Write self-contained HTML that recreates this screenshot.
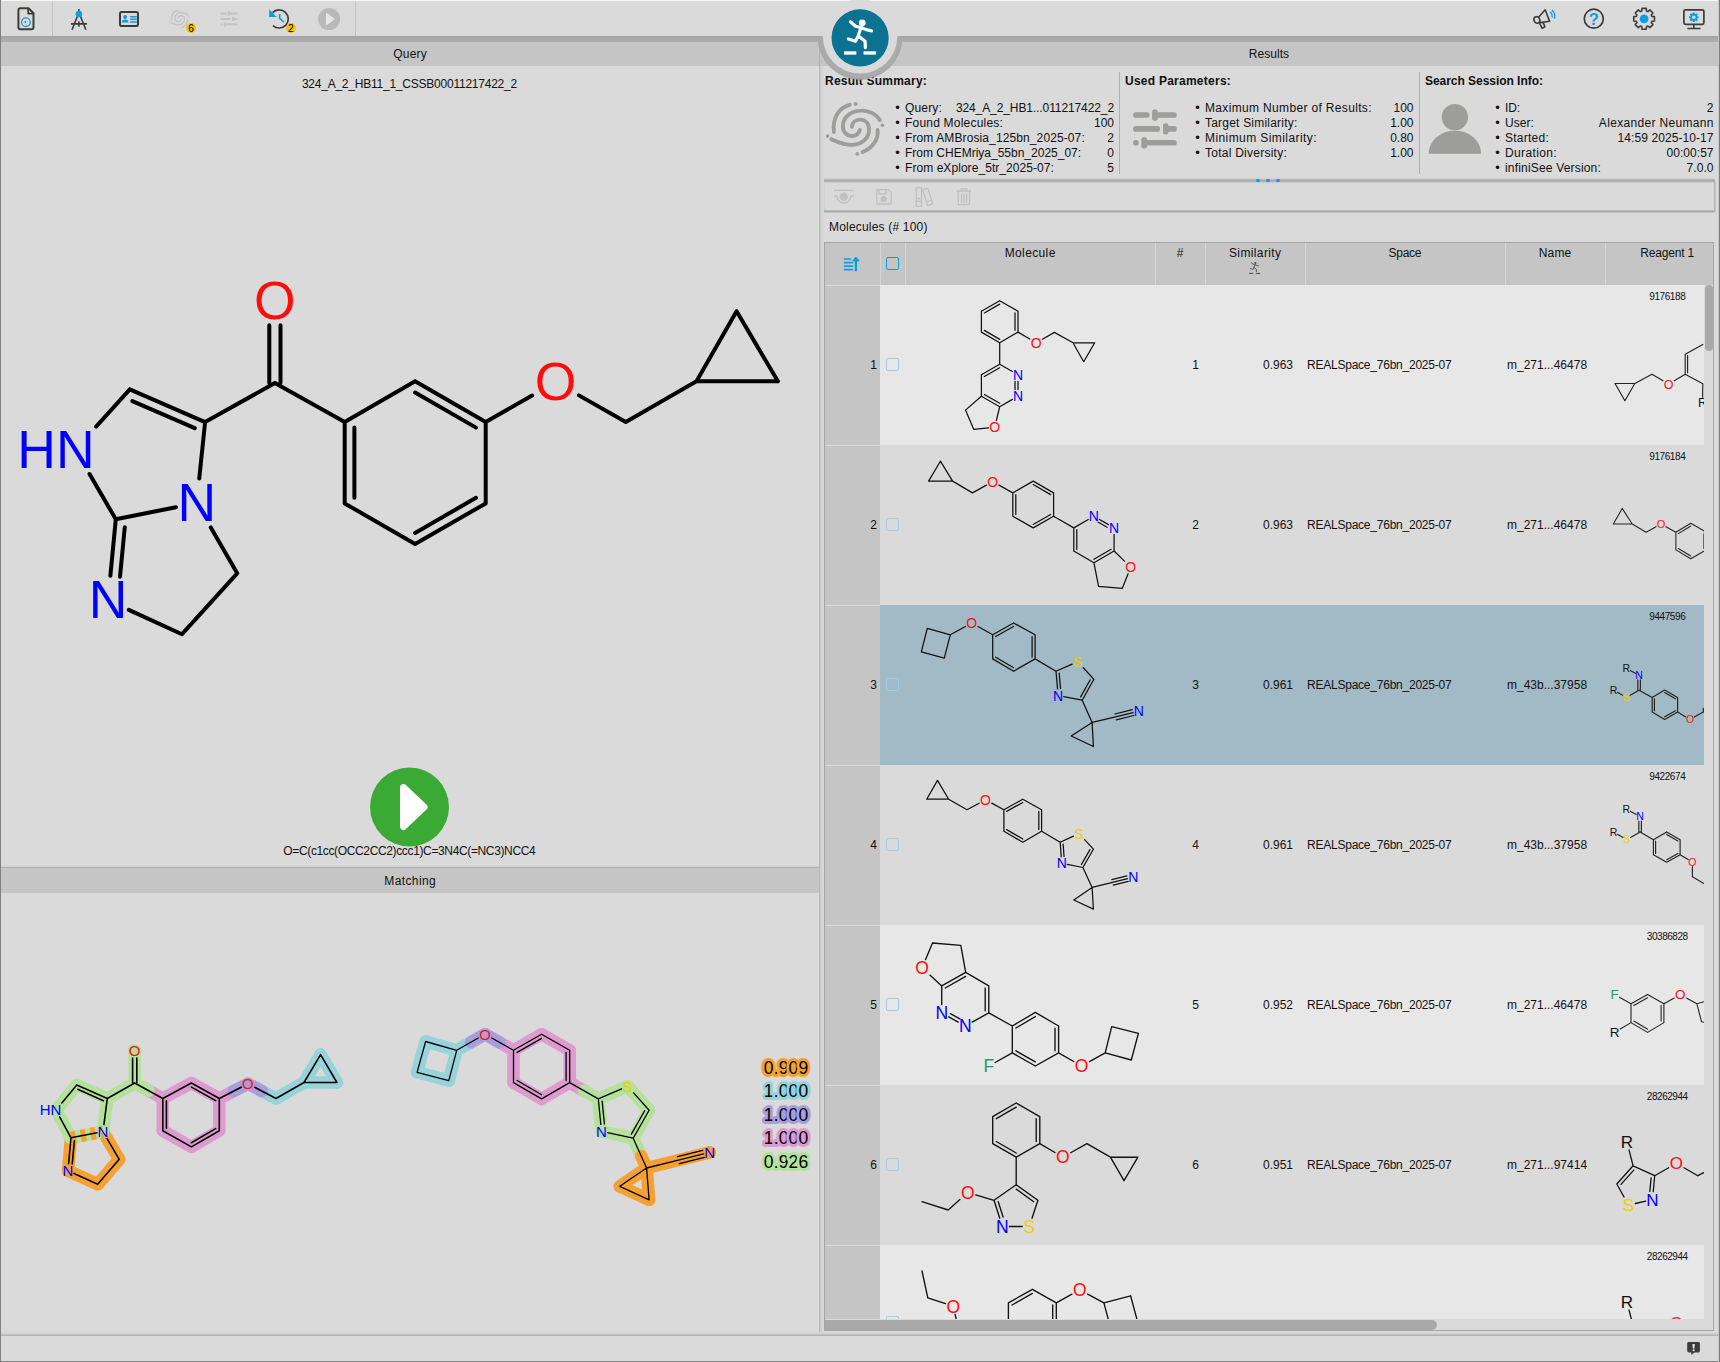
<!DOCTYPE html>
<html lang="en"><head><meta charset="utf-8"><title>infiniSee</title>
<style>
html,body{margin:0;padding:0;background:#dadada}
body{width:1720px;height:1362px;overflow:hidden;font-family:"Liberation Sans",sans-serif;color:#111}
#app{position:relative;width:1720px;height:1362px;overflow:hidden;background:#dadada}
.a{position:absolute}
.t{position:absolute;white-space:pre;color:#111}
svg{position:absolute;overflow:visible}

</style></head>
<body>
<div id="app">
<div class="a" style="left:0px;top:0px;width:1720px;height:1px;background:#f6f6f6;"></div>
<div class="a" style="left:52px;top:1px;width:1px;height:35px;background:#c4c4c4;"></div>
<div class="a" style="left:355px;top:1px;width:1px;height:35px;background:#c4c4c4;"></div>
<div class="a" style="left:0px;top:36px;width:1720px;height:6px;background:linear-gradient(#a4a4a4,#aeaeae);"></div>
<div class="a" style="left:0px;top:42px;width:1720px;height:24px;background:#c5c5c5;"></div>
<div class="a" style="left:819px;top:42px;width:1px;height:24px;background:#b0b0b0;"></div>
<div class="a" style="left:819px;top:66px;width:4px;height:1268px;background:linear-gradient(90deg,#b0b0b0,#cbcbcb 35%,#dadada);"></div>
<div class="a" style="left:1px;top:865px;width:818px;height:2px;background:linear-gradient(#dadada,#cfcfcf);"></div>
<div class="a" style="left:1px;top:867px;width:818px;height:1px;background:#b0b0b0;"></div>
<div class="a" style="left:1px;top:868px;width:818px;height:25px;background:#c5c5c5;"></div>
<div class="a" style="left:0px;top:1332px;width:1720px;height:4px;background:linear-gradient(#dadada,#d2d2d2 45%,#b2b2b2 80%,#b6b6b6);"></div>
<div class="a" style="left:0px;top:1361px;width:1720px;height:1px;background:#858585;"></div>
<div class="a" style="left:0px;top:0px;width:1px;height:1362px;background:#808080;"></div>
<div class="a" style="left:1719px;top:0px;width:1px;height:1362px;background:#7c7c7c;"></div>
<div class="a" style="left:1718px;top:0px;width:1px;height:1362px;background:#c8c8c8;"></div>
<div class="a" style="left:1119px;top:72px;width:1px;height:102px;background:#b0b0b0;"></div>
<div class="a" style="left:1419px;top:72px;width:1px;height:102px;background:#b0b0b0;"></div>
<div class="a" style="left:824px;top:177.5px;width:891px;height:5px;background:linear-gradient(#dadada,#b6b6b6 35%,#a7a7a7 55%,#bcbcbc 80%,#d8d8d8);"></div>
<div class="a" style="left:1256.4px;top:178.8px;width:3.2px;height:3.2px;background:#0b9de2;border-radius:50%"></div>
<div class="a" style="left:1266.4px;top:178.8px;width:3.2px;height:3.2px;background:#0b9de2;border-radius:50%"></div>
<div class="a" style="left:1276.4px;top:178.8px;width:3.2px;height:3.2px;background:#0b9de2;border-radius:50%"></div>
<div class="a" style="left:824px;top:209.8px;width:891px;height:3px;background:linear-gradient(#c6c6c6,#a8a8a8 50%,#cfcfcf);"></div>
<div class="a" style="left:1713.8px;top:181px;width:2px;height:31px;background:linear-gradient(90deg,#adadad,#cdcdcd);"></div>
<div class="a" style="left:824px;top:182px;width:1px;height:28px;background:#d0d0d0;"></div>
<div class="a" style="left:824px;top:242px;width:890px;height:1089px;background:#a6a6a6;"></div>
<div class="a" style="left:825px;top:243px;width:888px;height:42px;background:#c5c5c5;"></div>
<div class="a" style="left:880px;top:243px;width:1px;height:42px;background:#d6d6d6;"></div>
<div class="a" style="left:905px;top:243px;width:1px;height:42px;background:#d6d6d6;"></div>
<div class="a" style="left:1155px;top:243px;width:1px;height:42px;background:#d6d6d6;"></div>
<div class="a" style="left:1205px;top:243px;width:1px;height:42px;background:#d6d6d6;"></div>
<div class="a" style="left:1305px;top:243px;width:1px;height:42px;background:#d6d6d6;"></div>
<div class="a" style="left:1505px;top:243px;width:1px;height:42px;background:#d6d6d6;"></div>
<div class="a" style="left:1605px;top:243px;width:1px;height:42px;background:#d6d6d6;"></div>
<div class="a" style="left:825px;top:285px;width:55px;height:160px;background:#c5c5c5;"></div>
<div class="a" style="left:825px;top:285px;width:55px;height:1px;background:#dadada;"></div>
<div class="a" style="left:880px;top:285px;width:824px;height:160px;background:#e7e7e7;"></div>
<div class="a" style="left:886px;top:358px;width:11px;height:11px;border:1px solid #9fcbe4;border-radius:2px"></div>
<div class="a" style="left:825px;top:445px;width:55px;height:160px;background:#c5c5c5;"></div>
<div class="a" style="left:825px;top:445px;width:55px;height:1px;background:#dadada;"></div>
<div class="a" style="left:880px;top:445px;width:824px;height:160px;background:#dadada;"></div>
<div class="a" style="left:886px;top:518px;width:11px;height:11px;border:1px solid #9fcbe4;border-radius:2px"></div>
<div class="a" style="left:825px;top:605px;width:55px;height:160px;background:#c5c5c5;"></div>
<div class="a" style="left:825px;top:605px;width:55px;height:1px;background:#dadada;"></div>
<div class="a" style="left:880px;top:605px;width:824px;height:160px;background:#a2bac5;"></div>
<div class="a" style="left:886px;top:678px;width:11px;height:11px;border:1px solid #9fcbe4;border-radius:2px"></div>
<div class="a" style="left:825px;top:765px;width:55px;height:160px;background:#c5c5c5;"></div>
<div class="a" style="left:825px;top:765px;width:55px;height:1px;background:#dadada;"></div>
<div class="a" style="left:880px;top:765px;width:824px;height:160px;background:#dadada;"></div>
<div class="a" style="left:886px;top:838px;width:11px;height:11px;border:1px solid #9fcbe4;border-radius:2px"></div>
<div class="a" style="left:825px;top:925px;width:55px;height:160px;background:#c5c5c5;"></div>
<div class="a" style="left:825px;top:925px;width:55px;height:1px;background:#dadada;"></div>
<div class="a" style="left:880px;top:925px;width:824px;height:160px;background:#e7e7e7;"></div>
<div class="a" style="left:886px;top:998px;width:11px;height:11px;border:1px solid #9fcbe4;border-radius:2px"></div>
<div class="a" style="left:825px;top:1085px;width:55px;height:160px;background:#c5c5c5;"></div>
<div class="a" style="left:825px;top:1085px;width:55px;height:1px;background:#dadada;"></div>
<div class="a" style="left:880px;top:1085px;width:824px;height:160px;background:#dadada;"></div>
<div class="a" style="left:886px;top:1158px;width:11px;height:11px;border:1px solid #9fcbe4;border-radius:2px"></div>
<div class="a" style="left:825px;top:1245px;width:55px;height:74px;background:#c5c5c5;"></div>
<div class="a" style="left:825px;top:1245px;width:55px;height:1px;background:#dadada;"></div>
<div class="a" style="left:880px;top:1245px;width:824px;height:74px;background:#e7e7e7;"></div>
<div class="a" style="left:886px;top:1316px;width:11px;height:3px;border:1px solid #9fcbe4;border-bottom:0;border-radius:2px 2px 0 0"></div>
<div class="a" style="left:1704px;top:285px;width:9px;height:1034px;background:#dadada;"></div>
<div class="a" style="left:1704.5px;top:285px;width:8.5px;height:66px;background:#a9a9a9;border-radius:4px"></div>
<div class="a" style="left:825px;top:1319px;width:888px;height:11px;background:#dadada;"></div>
<div class="a" style="left:825px;top:1319.5px;width:612px;height:10.5px;background:#a9a9a9;border-radius:0 5px 5px 0"></div>
<div class="a" style="left:886px;top:257px;width:11px;height:11px;border:1px solid #0b9de2;border-radius:2px"></div>
<svg class="a" style="left:0;top:0" width="1720" height="1362" viewBox="0 0 1720 1362"><path d="M280.5 383L280.5 325.14M269.3 383L269.3 325.14M274.9 383L205.1 422.1M205.1 422.1L129.8 389.4M194.77 428.19L132.4 401.1M129.8 389.4L96.1 426.62M89.52 474.04L115.8 519.2M115.8 519.2L175.9 507.17M199.24 478.56L205.1 422.1M115.8 519.2L110.35 575.86M124.78 527.14L120.01 576.79M128.8 609.83L182 634.2M182 634.2L237.2 573.3M237.2 573.3L210.78 527.44M274.9 383L344.7 422M344.7 422L415.1 381.3M415.1 381.3L485.7 422M415.11 392.5L476 427.61M485.7 422L485.7 503.4M485.7 503.4L415.1 544.1M476 497.79L415.11 532.9M415.1 544.1L344.7 503.4M344.7 503.4L344.7 422M354.4 497.8L354.4 427.6M485.7 422L532.1 395.48M578.9 395.38L625.8 422M625.8 422L696.5 381.3M696.5 381.3L736.6 311.3M736.6 311.3L777.9 381.3M777.9 381.3L696.5 381.3" stroke="#000" stroke-width="4" stroke-linecap="round" fill="none"/>
<text x="274.9" y="318.65" font-family="Liberation Sans, sans-serif" font-size="53.5" fill="#ff0d0d" text-anchor="middle">O</text>
<text x="94.61" y="467.55" font-family="Liberation Sans, sans-serif" font-size="53.5" fill="#0000ff" text-anchor="end">HN</text>
<text x="196.7" y="520.95" font-family="Liberation Sans, sans-serif" font-size="53.5" fill="#0000ff" text-anchor="middle">N</text>
<text x="108" y="618.25" font-family="Liberation Sans, sans-serif" font-size="53.5" fill="#0000ff" text-anchor="middle">N</text>
<text x="555.5" y="400.05" font-family="Liberation Sans, sans-serif" font-size="53.5" fill="#ff0d0d" text-anchor="middle">O</text></svg>
<svg class="a" style="left:0;top:0" width="1720" height="1362" viewBox="0 0 1720 1362"><path d="M162.8 1098.5L191.4 1083" stroke="#dd9bd0" stroke-width="12.5" stroke-linecap="round" fill="none"/>
<path d="M191.4 1083L219.3 1098.5" stroke="#dd9bd0" stroke-width="12.5" stroke-linecap="round" fill="none"/>
<path d="M219.3 1098.5L219.3 1130.7" stroke="#dd9bd0" stroke-width="12.5" stroke-linecap="round" fill="none"/>
<path d="M219.3 1130.7L191.4 1146.9" stroke="#dd9bd0" stroke-width="12.5" stroke-linecap="round" fill="none"/>
<path d="M191.4 1146.9L162.8 1130.7" stroke="#dd9bd0" stroke-width="12.5" stroke-linecap="round" fill="none"/>
<path d="M162.8 1130.7L162.8 1098.5" stroke="#dd9bd0" stroke-width="12.5" stroke-linecap="round" fill="none"/>
<path d="M148.75 1090.75L162.8 1098.5" stroke="#dd9bd0" stroke-width="12.5" stroke-linecap="round" fill="none"/>
<path d="M219.3 1098.5L233.6 1091.1" stroke="#dd9bd0" stroke-width="12.5" stroke-linecap="round" fill="none"/>
<path d="M261.95 1091.1L276 1098.5" stroke="#96d4da" stroke-width="12.5" stroke-linecap="round" fill="none"/>
<path d="M276 1098.5L304 1082.5" stroke="#96d4da" stroke-width="12.5" stroke-linecap="round" fill="none"/>
<path d="M304 1082.5L320.6 1054.6" stroke="#96d4da" stroke-width="12.5" stroke-linecap="round" fill="none"/>
<path d="M320.6 1054.6L336.9 1082.5" stroke="#96d4da" stroke-width="12.5" stroke-linecap="round" fill="none"/>
<path d="M336.9 1082.5L304 1082.5" stroke="#96d4da" stroke-width="12.5" stroke-linecap="round" fill="none"/>
<path d="M71 1137.8L68 1170.7" stroke="#f5a033" stroke-width="12.5" stroke-linecap="round" fill="none"/>
<path d="M68 1170.7L97.7 1184.3" stroke="#f5a033" stroke-width="12.5" stroke-linecap="round" fill="none"/>
<path d="M97.7 1184.3L119.2 1159.3" stroke="#f5a033" stroke-width="12.5" stroke-linecap="round" fill="none"/>
<path d="M119.2 1159.3L103 1131.6" stroke="#f5a033" stroke-width="12.5" stroke-linecap="round" fill="none"/>
<circle cx="134.7" cy="1051" r="7" fill="#b4e19b"/>
<path d="M134.7 1051L134.7 1083" stroke="#b4e19b" stroke-width="12.5" stroke-linecap="round" fill="none"/>
<path d="M134.7 1083L148.75 1090.75" stroke="#b4e19b" stroke-width="12.5" stroke-linecap="round" fill="none"/>
<path d="M134.7 1083L107.3 1098.5" stroke="#b4e19b" stroke-width="12.5" stroke-linecap="round" fill="none"/>
<path d="M107.3 1098.5L76.8 1084.9" stroke="#b4e19b" stroke-width="12.5" stroke-linecap="round" fill="none"/>
<path d="M76.8 1084.9L56 1110" stroke="#b4e19b" stroke-width="12.5" stroke-linecap="round" fill="none"/>
<path d="M56 1110L71 1137.8" stroke="#b4e19b" stroke-width="12.5" stroke-linecap="round" fill="none"/>
<path d="M103 1131.6L107.3 1098.5" stroke="#b4e19b" stroke-width="12.5" stroke-linecap="round" fill="none"/>
<path d="M71 1137.8L103 1131.6" stroke="#b4e19b" stroke-width="12.5" stroke-linecap="round" fill="none"/>
<path d="M71 1137.8L103 1131.6" stroke="#f5a033" stroke-width="12.5" stroke-dasharray="5 5" fill="none"/>
<path d="M233.6 1091.1L247.9 1083.7" stroke="#a99ddc" stroke-width="12.5" stroke-linecap="round" fill="none"/>
<path d="M247.9 1083.7L261.95 1091.1" stroke="#a99ddc" stroke-width="12.5" stroke-linecap="round" fill="none"/>
<path d="M136.8 1083L136.8 1058.05M132.6 1083L132.6 1058.05M134.7 1083L107.3 1098.5M107.3 1098.5L76.8 1084.9M103.45 1100.72L77.72 1089.25M76.8 1084.9L61.84 1102.95M59.8 1117.05L71 1137.8M71 1137.8L97 1132.76M103.92 1124.55L107.3 1098.5M71 1137.8L68.64 1163.65M74.35 1140.73L72.23 1163.98M74 1173.45L97.7 1184.3M97.7 1184.3L119.2 1159.3M119.2 1159.3L107.12 1138.65M134.7 1083L162.8 1098.5M162.8 1098.5L191.4 1083M191.4 1083L219.3 1098.5M191.47 1087.16L215.73 1100.64M219.3 1098.5L219.3 1130.7M219.3 1130.7L191.4 1146.9M215.69 1128.63L191.39 1142.74M191.4 1146.9L162.8 1130.7M162.8 1130.7L162.8 1098.5M166.4 1128.62L166.4 1100.58M219.3 1098.5L241.15 1087.19M254.65 1087.26L276 1098.5M276 1098.5L304 1082.5M304 1082.5L320.6 1054.6M320.6 1054.6L336.9 1082.5M336.9 1082.5L304 1082.5" stroke="#000" stroke-width="1.6" stroke-linecap="round" fill="none"/>
<text x="134.7" y="1056.37" font-family="Liberation Sans, sans-serif" font-size="15" fill="#ff0d0d" text-anchor="middle">O</text>
<text x="61.41" y="1115.37" font-family="Liberation Sans, sans-serif" font-size="15" fill="#0000ff" text-anchor="end">HN</text>
<text x="103" y="1136.97" font-family="Liberation Sans, sans-serif" font-size="15" fill="#0000ff" text-anchor="middle">N</text>
<text x="68" y="1176.07" font-family="Liberation Sans, sans-serif" font-size="15" fill="#0000ff" text-anchor="middle">N</text>
<text x="247.9" y="1089.07" font-family="Liberation Sans, sans-serif" font-size="15" fill="#ff0d0d" text-anchor="middle">O</text><path d="M425.6 1041.5L456.7 1050.3" stroke="#96d4da" stroke-width="12.5" stroke-linecap="round" fill="none"/>
<path d="M456.7 1050.3L448.8 1080.6" stroke="#96d4da" stroke-width="12.5" stroke-linecap="round" fill="none"/>
<path d="M448.8 1080.6L417.1 1072.3" stroke="#96d4da" stroke-width="12.5" stroke-linecap="round" fill="none"/>
<path d="M417.1 1072.3L425.6 1041.5" stroke="#96d4da" stroke-width="12.5" stroke-linecap="round" fill="none"/>
<path d="M456.7 1050.3L470.85 1042.25" stroke="#96d4da" stroke-width="12.5" stroke-linecap="round" fill="none"/>
<path d="M513.5 1050.3L541.6 1034.2" stroke="#dd9bd0" stroke-width="12.5" stroke-linecap="round" fill="none"/>
<path d="M541.6 1034.2L569.7 1050.3" stroke="#dd9bd0" stroke-width="12.5" stroke-linecap="round" fill="none"/>
<path d="M569.7 1050.3L569.7 1082.6" stroke="#dd9bd0" stroke-width="12.5" stroke-linecap="round" fill="none"/>
<path d="M569.7 1082.6L541.6 1098.9" stroke="#dd9bd0" stroke-width="12.5" stroke-linecap="round" fill="none"/>
<path d="M541.6 1098.9L513.5 1082.6" stroke="#dd9bd0" stroke-width="12.5" stroke-linecap="round" fill="none"/>
<path d="M513.5 1082.6L513.5 1050.3" stroke="#dd9bd0" stroke-width="12.5" stroke-linecap="round" fill="none"/>
<path d="M499.25 1042.25L513.5 1050.3" stroke="#dd9bd0" stroke-width="12.5" stroke-linecap="round" fill="none"/>
<path d="M569.7 1082.6L584 1090.75" stroke="#dd9bd0" stroke-width="12.5" stroke-linecap="round" fill="none"/>
<path d="M584 1090.75L598.3 1098.9" stroke="#b4e19b" stroke-width="12.5" stroke-linecap="round" fill="none"/>
<path d="M598.3 1098.9L627.6 1086.2" stroke="#b4e19b" stroke-width="12.5" stroke-linecap="round" fill="none"/>
<path d="M627.6 1086.2L649.1 1110.2" stroke="#b4e19b" stroke-width="12.5" stroke-linecap="round" fill="none"/>
<path d="M649.1 1110.2L633.2 1138.2" stroke="#b4e19b" stroke-width="12.5" stroke-linecap="round" fill="none"/>
<path d="M633.2 1138.2L601.5 1131.4" stroke="#b4e19b" stroke-width="12.5" stroke-linecap="round" fill="none"/>
<path d="M601.5 1131.4L598.3 1098.9" stroke="#b4e19b" stroke-width="12.5" stroke-linecap="round" fill="none"/>
<path d="M633.2 1138.2L641.24 1156.08" stroke="#b4e19b" stroke-width="12.5" stroke-linecap="round" fill="none"/>
<path d="M641.24 1156.08L646.6 1168" stroke="#f5a033" stroke-width="12.5" stroke-linecap="round" fill="none"/>
<path d="M646.6 1168L678.4 1160.2" stroke="#f5a033" stroke-width="12.5" stroke-linecap="round" fill="none"/>
<path d="M678.4 1160.2L709.6 1152.4" stroke="#f5a033" stroke-width="12.5" stroke-linecap="round" fill="none"/>
<path d="M646.6 1168L619.8 1186.3" stroke="#f5a033" stroke-width="12.5" stroke-linecap="round" fill="none"/>
<path d="M619.8 1186.3L649.1 1199.8" stroke="#f5a033" stroke-width="12.5" stroke-linecap="round" fill="none"/>
<path d="M649.1 1199.8L646.6 1168" stroke="#f5a033" stroke-width="12.5" stroke-linecap="round" fill="none"/>
<circle cx="709.6" cy="1152.4" r="6.5" fill="#f5a033"/>
<path d="M470.85 1042.25L485 1034.2" stroke="#a99ddc" stroke-width="12.5" stroke-linecap="round" fill="none"/>
<path d="M485 1034.2L499.25 1042.25" stroke="#a99ddc" stroke-width="12.5" stroke-linecap="round" fill="none"/>
<path d="M425.6 1041.5L456.7 1050.3M456.7 1050.3L448.8 1080.6M448.8 1080.6L417.1 1072.3M417.1 1072.3L425.6 1041.5M456.7 1050.3L478.25 1038.04M491.75 1038.01L513.5 1050.3M513.5 1050.3L541.6 1034.2M517.09 1052.39L541.59 1038.36M541.6 1034.2L569.7 1050.3M569.7 1050.3L569.7 1082.6M566.1 1052.38L566.1 1080.52M569.7 1082.6L541.6 1098.9M541.6 1098.9L513.5 1082.6M541.61 1094.74L517.1 1080.53M513.5 1082.6L513.5 1050.3M569.7 1082.6L598.3 1098.9M598.3 1098.9L621.6 1088.8M633.6 1092.9L649.1 1110.2M649.1 1110.2L633.2 1138.2M644.68 1110.7L631.36 1134.15M633.2 1138.2L607.5 1132.69M600.81 1124.35L598.3 1098.9M604.39 1124L602.14 1101.15M633.2 1138.2L646.6 1168M646.6 1168L678.4 1160.2M678.4 1160.2L703.6 1153.9M679.27 1163.69L704.47 1157.39M677.53 1156.71L702.73 1150.41M646.6 1168L619.8 1186.3M619.8 1186.3L649.1 1199.8M649.1 1199.8L646.6 1168" stroke="#000" stroke-width="1.3" stroke-linecap="round" fill="none"/>
<text x="485" y="1039.57" font-family="Liberation Sans, sans-serif" font-size="15" fill="#ff0d0d" text-anchor="middle">O</text>
<text x="627.6" y="1091.57" font-family="Liberation Sans, sans-serif" font-size="15" fill="#f2cb05" text-anchor="middle">S</text>
<text x="601.5" y="1136.77" font-family="Liberation Sans, sans-serif" font-size="15" fill="#0000ff" text-anchor="middle">N</text>
<text x="709.6" y="1157.77" font-family="Liberation Sans, sans-serif" font-size="15" fill="#0000ff" text-anchor="middle">N</text></svg>
<svg class="a" style="left:0;top:0" width="1720" height="1362" viewBox="0 0 1720 1362"><defs><clipPath id="tc"><rect x="880" y="285" width="824" height="1034"/></clipPath></defs><g clip-path="url(#tc)"><path d="M999.7 300.7L1018 311.2M1018 311.2L1018 332.1M1015 312.93L1015 330.37M1018 332.1L999.7 342.8M999.7 342.8L981.4 332.1M999.72 339.34L984.41 330.38M981.4 332.1L981.4 311.2M981.4 311.2L999.7 300.7M984.4 312.94L999.69 304.16M1018 332.1L1029.8 339.08M1042.4 339.22L1054.4 332.4M1054.4 332.4L1073 342.8M1073 342.8L1094.7 342.8M1094.7 342.8L1083.7 361.7M1083.7 361.7L1073 342.8M999.7 342.8L999.7 364.3M999.7 364.3L1012.4 371.52M1018 381.28L1018 389.62M1015 381.28L1015 389.62M1012.4 399.41L999.7 406.7M999.7 406.7L981.4 396.2M999.69 403.24L984.4 394.46M981.4 396.2L981.4 374.7M981.4 374.7L999.7 364.3M984.39 376.45L999.68 367.76M999.7 406.7L996.38 420.52M988.5 427.79L973.8 429.4M973.8 429.4L965.5 410.1M965.5 410.1L981.4 396.2" stroke="#111" stroke-width="1.25" stroke-linecap="round" fill="none"/>
<text x="1036.1" y="347.81" font-family="Liberation Sans, sans-serif" font-size="14" fill="#ff0d0d" text-anchor="middle">O</text>
<text x="1018" y="379.71" font-family="Liberation Sans, sans-serif" font-size="14" fill="#0000ff" text-anchor="middle">N</text>
<text x="1018" y="401.21" font-family="Liberation Sans, sans-serif" font-size="14" fill="#0000ff" text-anchor="middle">N</text>
<text x="994.8" y="432.11" font-family="Liberation Sans, sans-serif" font-size="14" fill="#ff0d0d" text-anchor="middle">O</text>
<path d="M940.4 461.2L928.6 481.1M928.6 481.1L952.6 481.1M952.6 481.1L940.4 461.2M952.6 481.1L972.5 492.9M972.5 492.9L986.4 485.12M999 485.14L1012.8 492.9M1012.8 492.9L1033.2 481.1M1033.2 481.1L1053.6 492.9M1033.2 484.56L1050.6 494.63M1053.6 492.9L1053.6 516.2M1053.6 516.2L1033.2 527.9M1050.6 514.46L1033.21 524.44M1033.2 527.9L1012.8 516.2M1012.8 516.2L1012.8 492.9M1015.8 514.47L1015.8 494.63M1053.6 516.2L1073.8 527.9M1073.8 527.9L1088.3 519.46M1099.5 519.44L1108.5 524.66M1098 522.04L1107 527.25M1114.1 534.48L1114.1 551M1114.1 551L1093.9 562.7M1111.1 549.27L1093.9 559.24M1093.9 562.7L1073.8 551M1073.8 551L1073.8 527.9M1076.8 549.27L1076.8 529.63M1114.1 551L1124.5 561.09M1128.13 573.78L1122.2 588.4M1122.2 588.4L1098.6 586.3M1098.6 586.3L1093.9 562.7" stroke="#111" stroke-width="1.25" stroke-linecap="round" fill="none"/>
<text x="992.7" y="486.61" font-family="Liberation Sans, sans-serif" font-size="14" fill="#ff0d0d" text-anchor="middle">O</text>
<text x="1093.9" y="521.21" font-family="Liberation Sans, sans-serif" font-size="14" fill="#0000ff" text-anchor="middle">N</text>
<text x="1114.1" y="532.91" font-family="Liberation Sans, sans-serif" font-size="14" fill="#0000ff" text-anchor="middle">N</text>
<text x="1130.8" y="572.21" font-family="Liberation Sans, sans-serif" font-size="14" fill="#ff0d0d" text-anchor="middle">O</text>
<path d="M927.3 628.3L950.3 634.8M950.3 634.8L944.3 658.1M944.3 658.1L921.3 651.8M921.3 651.8L927.3 628.3M950.3 634.8L965.4 626.47M978 626.54L992.7 634.8M992.7 634.8L1013.6 623M995.68 636.56L1013.57 626.46M1013.6 623L1035.1 634.8M1035.1 634.8L1035.1 658.9M1032.1 636.53L1032.1 657.17M1035.1 658.9L1013.6 671.2M1013.6 671.2L992.7 658.9M1013.63 667.74L995.71 657.19M992.7 658.9L992.7 634.8M1035.1 658.9L1056 671.2M1056 671.2L1072.1 664.15M1083.3 667.78L1093.9 679.3M1093.9 679.3L1082.2 700.2M1090.22 679.74L1080.65 696.83M1082.2 700.2L1063.7 696.59M1057.53 688.92L1056 671.2M1060.52 688.66L1059.18 673.11M1082.2 700.2L1092.1 722.4M1092.1 722.4L1115.6 716.9M1115.6 716.9L1133.1 712.58M1116.32 719.81L1133.82 715.49M1114.88 713.99L1132.38 709.67M1092.1 722.4L1071.2 736M1071.2 736L1093.4 746.5M1093.4 746.5L1092.1 722.4" stroke="#111" stroke-width="1.25" stroke-linecap="round" fill="none"/>
<text x="971.7" y="628.01" font-family="Liberation Sans, sans-serif" font-size="14" fill="#ff0d0d" text-anchor="middle">O</text>
<text x="1077.7" y="666.71" font-family="Liberation Sans, sans-serif" font-size="14" fill="#f2cb05" text-anchor="middle">S</text>
<text x="1058.1" y="700.51" font-family="Liberation Sans, sans-serif" font-size="14" fill="#0000ff" text-anchor="middle">N</text>
<text x="1138.7" y="716.21" font-family="Liberation Sans, sans-serif" font-size="14" fill="#0000ff" text-anchor="middle">N</text>
<path d="M937.5 780.4L926.7 799.2M926.7 799.2L948.7 799.2M948.7 799.2L937.5 780.4M948.7 799.2L967 809.7M967 809.7L979.1 803.19M991.7 803.17L1003.9 809.7M1003.9 809.7L1022.8 799.2M1006.67 811.36L1022.75 802.43M1022.8 799.2L1041.6 809.7M1041.6 809.7L1041.6 831.2M1038.8 811.32L1038.8 829.58M1041.6 831.2L1022.8 842.2M1022.8 842.2L1003.9 831.2M1022.81 838.97L1006.71 829.59M1003.9 831.2L1003.9 809.7M1041.6 831.2L1060.2 842.2M1060.2 842.2L1073.4 836.09M1084.6 839.61L1093.4 849.2M1093.4 849.2L1082.9 867.5M1089.96 849.57L1081.48 864.34M1082.9 867.5L1067.3 864.41M1061.23 856.72L1060.2 842.2M1064.03 856.52L1063.14 844.03M1082.9 867.5L1092.1 887.4M1092.1 887.4L1112.5 882.4M1112.5 882.4L1127.6 878.61M1113.18 885.12L1128.28 881.32M1111.82 879.68L1126.92 875.89M1092.1 887.4L1073.8 900M1073.8 900L1093.4 909.1M1093.4 909.1L1092.1 887.4" stroke="#111" stroke-width="1.25" stroke-linecap="round" fill="none"/>
<text x="985.4" y="804.81" font-family="Liberation Sans, sans-serif" font-size="14" fill="#ff0d0d" text-anchor="middle">O</text>
<text x="1079" y="838.51" font-family="Liberation Sans, sans-serif" font-size="14" fill="#f2cb05" text-anchor="middle">S</text>
<text x="1061.7" y="868.31" font-family="Liberation Sans, sans-serif" font-size="14" fill="#0000ff" text-anchor="middle">N</text>
<text x="1133.2" y="882.21" font-family="Liberation Sans, sans-serif" font-size="14" fill="#0000ff" text-anchor="middle">N</text>
<path d="M925.47 959.67L932.5 943M932.5 943L960.8 945.4M960.8 945.4L965.7 972.3M965.7 972.3L941.7 985.9M965.67 976.46L945.28 988.01M941.7 985.9L929.88 975.1M941.7 985.9L941.7 1004.67M948.7 1016.8L958.2 1022.1M950.45 1013.66L959.95 1018.95M972.2 1022.11L988.8 1012.9M988.8 1012.9L988.8 985.9M985.2 1010.82L985.2 987.98M988.8 985.9L965.7 972.3M988.8 1012.9L1012.3 1026M1012.3 1026L1035.3 1012.4M1015.92 1028.04L1035.34 1016.56M1035.3 1012.4L1058.6 1026M1058.6 1026L1058.6 1052.9M1055 1028.08L1055 1050.82M1058.6 1052.9L1035.3 1066M1035.3 1066L1012.3 1052.9M1035.28 1061.84L1015.89 1050.8M1012.3 1052.9L1012.3 1026M1012.3 1052.9L995.1 1062.49M1058.6 1052.9L1073.72 1061.51M1089.47 1061.63L1105.2 1052.9M1105.2 1052.9L1111.7 1026.7M1111.7 1026.7L1138.4 1033.3M1138.4 1033.3L1131.3 1060M1131.3 1060L1105.2 1052.9" stroke="#111" stroke-width="1.35" stroke-linecap="round" fill="none"/>
<text x="922" y="974.16" font-family="Liberation Sans, sans-serif" font-size="17.5" fill="#ff0d0d" text-anchor="middle">O</text>
<text x="941.7" y="1019.16" font-family="Liberation Sans, sans-serif" font-size="17.5" fill="#0000ff" text-anchor="middle">N</text>
<text x="965.2" y="1032.27" font-family="Liberation Sans, sans-serif" font-size="17.5" fill="#0000ff" text-anchor="middle">N</text>
<text x="988.8" y="1072.27" font-family="Liberation Sans, sans-serif" font-size="17.5" fill="#1fa055" text-anchor="middle">F</text>
<text x="1081.6" y="1072.27" font-family="Liberation Sans, sans-serif" font-size="17.5" fill="#ff0d0d" text-anchor="middle">O</text>
<path d="M1016.2 1103L1039.8 1116.6M1039.8 1116.6L1039.8 1143.6M1036.2 1118.68L1036.2 1141.52M1039.8 1143.6L1016.2 1157.2M1016.2 1157.2L992.7 1143.6M1016.2 1153.04L996.3 1141.53M992.7 1143.6L992.7 1116.6M992.7 1116.6L1016.2 1103M996.3 1118.67L1016.2 1107.16M1039.8 1143.6L1054.92 1152.54M1070.67 1152.76L1086.9 1143.6M1086.9 1143.6L1110.4 1157.2M1110.4 1157.2L1137.9 1157.2M1137.9 1157.2L1124 1180.7M1124 1180.7L1110.4 1157.2M1016.2 1157.2L1016.2 1184.7M1016.2 1184.7L1037.9 1200.3M1016.22 1189.15L1033.67 1201.7M1037.9 1200.3L1032 1218.28M1022.3 1226.5L1009.4 1226.5M999.76 1218.28L994 1200.3M1003.19 1217.18L998.23 1201.69M994 1200.3L1016.2 1184.7M994 1200.3L975.67 1194.84M959.92 1199.53L948.2 1210M948.2 1210L922 1201.7" stroke="#111" stroke-width="1.35" stroke-linecap="round" fill="none"/>
<text x="1062.8" y="1163.47" font-family="Liberation Sans, sans-serif" font-size="17.5" fill="#ff0d0d" text-anchor="middle">O</text>
<text x="1029.3" y="1232.77" font-family="Liberation Sans, sans-serif" font-size="17.5" fill="#f2cb05" text-anchor="middle">S</text>
<text x="1002.4" y="1232.77" font-family="Liberation Sans, sans-serif" font-size="17.5" fill="#0000ff" text-anchor="middle">N</text>
<text x="967.8" y="1198.77" font-family="Liberation Sans, sans-serif" font-size="17.5" fill="#ff0d0d" text-anchor="middle">O</text>
<path d="M922 1271L927.8 1297.9M927.8 1297.9L945.52 1303.72M955.17 1314.52L958.5 1330M1008.4 1302.9L1032.4 1289.3M1011.98 1305.01L1032.37 1293.46M1032.4 1289.3L1056.3 1302.9M1056.3 1302.9L1056.3 1330M1052.7 1304.98L1052.7 1327.92M1008.4 1302.9L1008.4 1330M1056.3 1302.9L1071.92 1294.19M1087.67 1294.08L1103.9 1302.9M1103.9 1302.9L1130.6 1295.8M1130.6 1295.8L1137.8 1322.5M1137.8 1322.5L1111 1329.6M1111 1329.6L1103.9 1302.9" stroke="#111" stroke-width="1.35" stroke-linecap="round" fill="none"/>
<text x="953.4" y="1312.57" font-family="Liberation Sans, sans-serif" font-size="17.5" fill="#ff0d0d" text-anchor="middle">O</text>
<text x="1079.8" y="1296.07" font-family="Liberation Sans, sans-serif" font-size="17.5" fill="#ff0d0d" text-anchor="middle">O</text><path d="M1615 383.5L1634.8 383.5M1634.8 383.5L1624.9 400.7M1624.9 400.7L1615 383.5M1634.8 383.5L1652 374.2M1652 374.2L1662.97 380.81M1674.22 380.81L1685.2 374.2M1685.2 374.2L1685.2 354.3M1687.6 372.81L1687.6 355.69M1685.2 354.3L1702.8 344.4M1685.2 374.2L1702.8 383.7M1702.8 383.7L1702.59 397.12M1705.18 385.12L1704.99 397.16" stroke="#222" stroke-width="1.15" stroke-linecap="round" fill="none"/>
<text x="1668.6" y="388.68" font-family="Liberation Sans, sans-serif" font-size="12.5" fill="#ff0d0d" text-anchor="middle">O</text>
<text x="1702.5" y="407.48" font-family="Liberation Sans, sans-serif" font-size="12.5" fill="#111" text-anchor="middle">R</text>
<path d="M1622.2 508.4L1613.3 524M1613.3 524L1632.2 524M1632.2 524L1622.2 508.4M1632.2 524L1646.1 532.3M1646.1 532.3L1656.05 526.76M1665.95 526.76L1675.9 532.3M1675.9 532.3L1690.8 523.3M1678.33 533.64L1690.85 526.07M1690.8 523.3L1706.3 532.3M1706.3 532.3L1706.3 549.9M1703.9 533.69L1703.9 548.51M1706.3 549.9L1690.8 558.8M1690.8 558.8L1675.9 549.9M1690.84 556.03L1678.32 548.55M1675.9 549.9L1675.9 532.3" stroke="#222" stroke-width="1.05" stroke-linecap="round" fill="none"/>
<text x="1661" y="527.94" font-family="Liberation Sans, sans-serif" font-size="11" fill="#ff0d0d" text-anchor="middle">O</text>
<path d="M1630.27 670.53L1635.32 673.37M1637.83 679.94L1637.83 690.3M1640.37 679.94L1640.37 690.3M1639.1 690.3L1630.08 695.23M1622.52 695.14L1617.47 692.26M1639.1 690.3L1652.2 697.6M1652.2 697.6L1664.6 690M1664.6 690L1677.6 697.6M1664.59 692.54L1675.39 698.86M1677.6 697.6L1677.6 712.1M1677.6 712.1L1664.6 719.4M1675.42 710.8L1664.63 716.86M1664.6 719.4L1652.2 712.1M1652.2 712.1L1652.2 697.6M1654.4 710.83L1654.4 698.87M1677.6 712.1L1685.75 716.9M1694.25 717.07L1703.3 712.1M1703.3 712.1L1703.3 708.3" stroke="#222" stroke-width="1.15" stroke-linecap="round" fill="none"/>
<text x="1626.3" y="672.06" font-family="Liberation Sans, sans-serif" font-size="10.5" fill="#111" text-anchor="middle">R</text>
<text x="1639.1" y="679.26" font-family="Liberation Sans, sans-serif" font-size="10.5" fill="#0000ff" text-anchor="middle">N</text>
<text x="1626.3" y="701.06" font-family="Liberation Sans, sans-serif" font-size="10.5" fill="#f2cb05" text-anchor="middle">S</text>
<text x="1613.5" y="693.76" font-family="Liberation Sans, sans-serif" font-size="10.5" fill="#111" text-anchor="middle">R</text>
<text x="1690" y="723.16" font-family="Liberation Sans, sans-serif" font-size="10.5" fill="#ff0d0d" text-anchor="middle">O</text>
<path d="M1630.27 811.14L1636.32 814.56M1638.83 821.14L1638.83 831.9M1641.37 821.14L1641.37 831.9M1640.1 831.9L1630.58 837.48M1623.02 837.48L1617.47 834.23M1640.1 831.9L1653.4 839.7M1653.4 839.7L1666.7 831.9M1666.7 831.9L1680.1 839.7M1666.69 834.44L1677.9 840.96M1680.1 839.7L1680.1 854.7M1680.1 854.7L1666.7 862.2M1677.92 853.4L1666.73 859.66M1666.7 862.2L1653.4 854.7M1653.4 854.7L1653.4 839.7M1655.6 853.43L1655.6 840.97M1680.1 854.7L1688.15 859.61M1692.4 866.64L1692.4 876.7M1692.4 876.7L1705 884.3" stroke="#222" stroke-width="1.15" stroke-linecap="round" fill="none"/>
<text x="1626.3" y="812.66" font-family="Liberation Sans, sans-serif" font-size="10.5" fill="#111" text-anchor="middle">R</text>
<text x="1640.1" y="820.46" font-family="Liberation Sans, sans-serif" font-size="10.5" fill="#0000ff" text-anchor="middle">N</text>
<text x="1626.8" y="843.46" font-family="Liberation Sans, sans-serif" font-size="10.5" fill="#f2cb05" text-anchor="middle">S</text>
<text x="1613.5" y="835.66" font-family="Liberation Sans, sans-serif" font-size="10.5" fill="#111" text-anchor="middle">R</text>
<text x="1692.4" y="865.96" font-family="Liberation Sans, sans-serif" font-size="10.5" fill="#ff0d0d" text-anchor="middle">O</text>
<path d="M1619.46 997.33L1631 1003.8M1631 1003.8L1647.6 994.6M1633.77 1005.47L1647.54 997.83M1647.6 994.6L1663.9 1003.8M1663.9 1003.8L1663.9 1022.6M1661.1 1005.42L1661.1 1020.98M1663.9 1022.6L1647.6 1032.4M1647.6 1032.4L1631 1022.6M1647.63 1029.17L1633.82 1021.01M1631 1022.6L1631 1003.8M1631 1022.6L1620.27 1029.01M1663.9 1003.8L1674.22 998.01M1686.38 997.97L1696.9 1003.8M1696.9 1003.8L1706 1001.2M1696.9 1003.8L1701.5 1021.7M1701.5 1021.7L1708 1023" stroke="#222" stroke-width="1.1" stroke-linecap="round" fill="none"/>
<text x="1614.6" y="999.43" font-family="Liberation Sans, sans-serif" font-size="13.5" fill="#1fa055" text-anchor="middle">F</text>
<text x="1614.6" y="1037.23" font-family="Liberation Sans, sans-serif" font-size="13.5" fill="#111" text-anchor="middle">R</text>
<text x="1680.3" y="999.43" font-family="Liberation Sans, sans-serif" font-size="13.5" fill="#ff0d0d" text-anchor="middle">O</text>
<path d="M1629.03 1149.79L1633.1 1165.8M1633.1 1165.8L1654.7 1175.7M1654.7 1175.7L1653.23 1191.71M1651.09 1177.85L1649.85 1191.4M1645.7 1201.2L1635.3 1203.5M1624.05 1197.01L1616.8 1184M1616.8 1184L1633.1 1165.8M1620.98 1184.43L1633.98 1169.91M1654.7 1175.7L1668.65 1167.76M1683.95 1167.78L1697.8 1175.7M1697.8 1175.7L1708 1170.5" stroke="#111" stroke-width="1.3" stroke-linecap="round" fill="none"/>
<text x="1627" y="1147.89" font-family="Liberation Sans, sans-serif" font-size="17" fill="#111" text-anchor="middle">R</text>
<text x="1652.5" y="1205.79" font-family="Liberation Sans, sans-serif" font-size="17" fill="#0000ff" text-anchor="middle">N</text>
<text x="1628.5" y="1211.09" font-family="Liberation Sans, sans-serif" font-size="17" fill="#f2cb05" text-anchor="middle">S</text>
<text x="1676.3" y="1169.49" font-family="Liberation Sans, sans-serif" font-size="17" fill="#ff0d0d" text-anchor="middle">O</text>
<path d="M1629.03 1309.99L1633.1 1326" stroke="#111" stroke-width="1.3" stroke-linecap="round" fill="none"/>
<text x="1627" y="1308.09" font-family="Liberation Sans, sans-serif" font-size="17" fill="#111" text-anchor="middle">R</text>
<text x="1676.3" y="1328.99" font-family="Liberation Sans, sans-serif" font-size="17" fill="#ff0d0d" text-anchor="middle">O</text></g></svg>
<svg class="a" style="left:0;top:0" width="1720" height="1362" viewBox="0 0 1720 1362"><text x="786" y="1073.8" font-family="Liberation Sans, sans-serif" font-size="17.5" text-anchor="middle" textLength="44.5" fill="#000" stroke="#f5a033" stroke-width="6" stroke-linejoin="round" paint-order="stroke">0.909</text><text x="786" y="1097.3" font-family="Liberation Sans, sans-serif" font-size="17.5" text-anchor="middle" textLength="44.5" fill="#000" stroke="#96d4da" stroke-width="6" stroke-linejoin="round" paint-order="stroke">1.000</text><text x="786" y="1120.8" font-family="Liberation Sans, sans-serif" font-size="17.5" text-anchor="middle" textLength="44.5" fill="#000" stroke="#a99ddc" stroke-width="6" stroke-linejoin="round" paint-order="stroke">1.000</text><text x="786" y="1144.3" font-family="Liberation Sans, sans-serif" font-size="17.5" text-anchor="middle" textLength="44.5" fill="#000" stroke="#dd9bd0" stroke-width="6" stroke-linejoin="round" paint-order="stroke">1.000</text><text x="786" y="1167.8" font-family="Liberation Sans, sans-serif" font-size="17.5" text-anchor="middle" textLength="44.5" fill="#000" stroke="#b4e19b" stroke-width="6" stroke-linejoin="round" paint-order="stroke">0.926</text></svg>
<svg class="a" style="left:0;top:0;z-index:3" width="1720" height="1362" viewBox="0 0 1720 1362"><path d="M20 8.3H28.5L33.5 13.3V27.3Q33.5 29.2 31.6 29.2H20.3Q18.4 29.2 18.4 27.3V10.2Q18.4 8.3 20.3 8.3Z" fill="none" stroke="#3c3c3b" stroke-width="2" stroke-linejoin="round"/><path d="M28.2 8.6V13.6H33.2" fill="none" stroke="#3c3c3b" stroke-width="1.8" stroke-linejoin="round"/><circle cx="25.9" cy="22.2" r="4.3" fill="none" stroke="#0b9de2" stroke-width="1.3"/><circle cx="25.3" cy="22.1" r="1" fill="#0b9de2"/><path d="M78.9 9V13M77.9 15L72 29.7M79.9 15L85.9 29.7M70.9 23.9H87M78.9 21.3V26.8" fill="none" stroke="#3c3c3b" stroke-width="1.6"/><circle cx="78.9" cy="14" r="3.3" fill="#0b9de2"/><rect x="120" y="11.9" width="18" height="14.2" rx="1.8" fill="none" stroke="#3c3c3b" stroke-width="2"/><circle cx="125.1" cy="17" r="1.9" fill="#0b9de2"/><path d="M121.7 22.4Q121.7 19.6 125.1 19.6Q128.5 19.6 128.5 22.4Z" fill="#0b9de2"/><path d="M130.2 16.7H136.8M130.2 19.3H136.8M130.2 21.9H136.8" stroke="#0b9de2" stroke-width="1.5"/><g transform="translate(166.67 6.82) scale(0.0186)"><g fill="none" stroke="#c4c4c4" stroke-width="75" stroke-linecap="round"><path d="M580 190C380 240 240 430 270 720"/><path d="M1165 490C1080 340 900 300 800 305C600 310 450 430 445 600C445 740 540 805 625 800C700 795 760 750 775 680"/><path d="M220 860C350 920 500 975 640 970C820 965 955 830 955 680C955 540 870 480 780 480C690 480 625 540 620 620"/><path d="M1120 680C1150 860 1010 1040 830 1110"/></g><g fill="#c4c4c4"><circle cx="695" cy="175" r="37"/><circle cx="1215" cy="590" r="35"/><circle cx="148" cy="800" r="35"/><circle cx="725" cy="1145" r="37"/></g></g><g transform="translate(215.1 5.6) scale(0.0203)"><rect x="255" y="335.0" width="320" height="110" rx="50" fill="#c4c4c4"/><rect x="700" y="335.0" width="405" height="110" rx="50" fill="#c4c4c4"/><rect x="625" y="280.0" width="110" height="220" rx="40" fill="#c4c4c4"/><rect x="255" y="605.0" width="525" height="110" rx="50" fill="#c4c4c4"/><rect x="900" y="605.0" width="205" height="110" rx="50" fill="#c4c4c4"/><rect x="838" y="550.0" width="102" height="220" rx="40" fill="#c4c4c4"/><rect x="255" y="875.0" width="110" height="110" rx="50" fill="#c4c4c4"/><rect x="470" y="875.0" width="635" height="110" rx="50" fill="#c4c4c4"/><rect x="415" y="820.0" width="110" height="220" rx="40" fill="#c4c4c4"/></g><path d="M272.6 12.6A9.1 9.1 0 1 1 273 25.6" fill="none" stroke="#3c3c3b" stroke-width="1.7"/><path d="M269.1 9.3V16.9H276.6Z" fill="#0b9de2"/><path d="M279.6 14V18.1L283.9 22.3" fill="none" stroke="#0b9de2" stroke-width="1.6"/><circle cx="329.1" cy="19.1" r="11" fill="#b9b9b9"/><path d="M326.6 13.6L333.9 19.1L326.6 24.6Z" fill="#e6e6e6" stroke="#e6e6e6" stroke-width="1.2" stroke-linejoin="round"/><g fill="none" stroke="#3c3c3b" stroke-width="1.6" stroke-linejoin="round" stroke-linecap="round"><path d="M1538.5 17.2L1545.2 9.8L1549.6 21.3L1540.2 22.6"/><ellipse cx="1536.9" cy="19.9" rx="2.9" ry="3.3" transform="rotate(-20 1536.9 19.9)"/><path d="M1539.6 23.4L1542.1 28.2L1544.9 26.7L1543.3 23.2"/></g><path d="M1550.6 12.3Q1552.6 14.4 1552.2 17.2M1552.2 10.2Q1555.6 13.6 1554.6 18.2" fill="none" stroke="#0b9de2" stroke-width="1.3" stroke-linecap="round"/><circle cx="1593.8" cy="18.7" r="9.5" fill="none" stroke="#3c3c3b" stroke-width="1.7"/><path d="M1641.69 11.07L1641.95 8.42L1646.25 8.42L1646.51 11.07L1647.87 11.63L1649.92 9.94L1652.96 12.98L1651.27 15.03L1651.83 16.39L1654.48 16.65L1654.48 20.95L1651.83 21.21L1651.27 22.57L1652.96 24.62L1649.92 27.66L1647.87 25.97L1646.51 26.53L1646.25 29.18L1641.95 29.18L1641.69 26.53L1640.33 25.97L1638.28 27.66L1635.24 24.62L1636.93 22.57L1636.37 21.21L1633.72 20.95L1633.72 16.65L1636.37 16.39L1636.93 15.03L1635.24 12.98L1638.28 9.94L1640.33 11.63Z" fill="none" stroke="#3c3c3b" stroke-width="1.6" stroke-linejoin="round"/><circle cx="1644.1" cy="18.8" r="4.4" fill="#0b9de2"/><rect x="1683.9" y="9.9" width="20" height="14.4" rx="1.6" fill="none" stroke="#3c3c3b" stroke-width="1.7"/><path d="M1693.8 24.6V28.2M1687.4 28.5H1700.6" stroke="#3c3c3b" stroke-width="1.6" fill="none"/><path d="M1692.73 13.86L1692.8 12.5L1694.8 12.5L1694.87 13.86L1695.47 14.11L1696.49 13.2L1697.9 14.61L1696.99 15.63L1697.24 16.23L1698.6 16.3L1698.6 18.3L1697.24 18.37L1696.99 18.97L1697.9 19.99L1696.49 21.4L1695.47 20.49L1694.87 20.74L1694.8 22.1L1692.8 22.1L1692.73 20.74L1692.13 20.49L1691.11 21.4L1689.7 19.99L1690.61 18.97L1690.36 18.37L1689 18.3L1689 16.3L1690.36 16.23L1690.61 15.63L1689.7 14.61L1691.11 13.2L1692.13 14.11Z" fill="#0b9de2"/><circle cx="1693.8" cy="17.3" r="1.7" fill="#dadada"/><defs><clipPath id="cb"><rect x="800" y="36" width="120" height="60"/></clipPath></defs><circle cx="860.1" cy="37.5" r="42.2" fill="#a4a4a4" clip-path="url(#cb)"/><circle cx="860.1" cy="37.3" r="41.2" fill="#ababab" clip-path="url(#cb)"/><circle cx="860.1" cy="36.4" r="37.2" fill="#dadada"/><circle cx="860.1" cy="37.9" r="28.6" fill="#0b7391"/><g transform="translate(825 3) scale(0.051395)"><g fill="none" stroke="#fff" stroke-width="62" stroke-linecap="round" stroke-linejoin="round"><path d="M495 365L595 452L700 478L800 518L905 542"/><path d="M700 478L640 655L592 745L455 700"/><path d="M650 640L780 742L785 868"/></g><circle cx="725" cy="385" r="66" fill="#fff"/><rect x="370" y="940" width="240" height="65" fill="#fff"/><rect x="750" y="940" width="245" height="65" fill="#fff"/></g><g transform="translate(820 95) scale(0.05138)"><g fill="none" stroke="#9d9d9c" stroke-width="75" stroke-linecap="round"><path d="M580 190C380 240 240 430 270 720"/><path d="M1165 490C1080 340 900 300 800 305C600 310 450 430 445 600C445 740 540 805 625 800C700 795 760 750 775 680"/><path d="M220 860C350 920 500 975 640 970C820 965 955 830 955 680C955 540 870 480 780 480C690 480 625 540 620 620"/><path d="M1120 680C1150 860 1010 1040 830 1110"/></g><g fill="#9d9d9c"><circle cx="695" cy="175" r="37"/><circle cx="1215" cy="590" r="35"/><circle cx="148" cy="800" r="35"/><circle cx="725" cy="1145" r="37"/></g></g><g transform="translate(1120 95) scale(0.05138)"><rect x="255" y="335.0" width="320" height="110" rx="50" fill="#9d9d9c"/><rect x="700" y="335.0" width="405" height="110" rx="50" fill="#9d9d9c"/><rect x="625" y="280.0" width="110" height="220" rx="40" fill="#9d9d9c"/><rect x="255" y="605.0" width="525" height="110" rx="50" fill="#9d9d9c"/><rect x="900" y="605.0" width="205" height="110" rx="50" fill="#9d9d9c"/><rect x="838" y="550.0" width="102" height="220" rx="40" fill="#9d9d9c"/><rect x="255" y="875.0" width="110" height="110" rx="50" fill="#9d9d9c"/><rect x="470" y="875.0" width="635" height="110" rx="50" fill="#9d9d9c"/><rect x="415" y="820.0" width="110" height="220" rx="40" fill="#9d9d9c"/></g><circle cx="1454.9" cy="117.1" r="13.2" fill="#9d9d9c"/><path d="M1428.7 153.8A26.2 23.4 0 0 1 1481.1 153.8Z" fill="#9d9d9c"/><g fill="none" stroke="#c0c0c0" stroke-width="1.3"><path d="M834 190.4H853.8M834 196H836.9A7 7 0 0 0 850.9 196H853.8"/><path d="M876.8 189.6H888L891.2 192.8V204H876.8ZM879 189.6V193.8H886.2V189.6"/><rect x="916.2" y="187.8" width="5.4" height="18.4"/><path d="M916.2 201.5H921.6M917.5 198.5H920.3"/><path d="M922.8 189.6L928 188.4L932.6 203.8L927.6 205.6Z"/><path d="M926.6 201.6L931.6 200"/><path d="M956.5 191H971M961.2 190.8V188.8H966.8V190.8M958 191.4L958.4 204.6H969.4L969.8 191.4M961.5 193.7V203M964 193.7V203M966.6 193.7V203"/></g><circle cx="843.8" cy="196.6" r="4.2" fill="#c0c0c0"/><circle cx="883.8" cy="199.1" r="3.1" fill="#c0c0c0"/><path d="M844.6 259H850.4M844.6 262.6H852.4M844.6 266.2H852.4M844.6 269.7H852.4" stroke="#0b9de2" stroke-width="1.7" stroke-linecap="round"/><path d="M855.9 259V270.5" stroke="#0b9de2" stroke-width="2.3" stroke-linecap="round"/><path d="M852.6 261L855.9 257L859.3 261Z" fill="#0b9de2" stroke="#0b9de2" stroke-width="0.8" stroke-linejoin="round"/><g transform="translate(1242.6 256.29) scale(0.0176)"><g fill="none" stroke="#555" stroke-width="55" stroke-linecap="round" stroke-linejoin="round"><path d="M495 365L595 452L700 478L800 518L905 542"/><path d="M700 478L640 655L592 745L455 700"/><path d="M650 640L780 742L785 868"/></g><circle cx="725" cy="385" r="66" fill="#555"/><rect x="370" y="940" width="240" height="65" fill="#555"/><rect x="750" y="940" width="245" height="65" fill="#555"/></g><circle cx="409.5" cy="807" r="39.5" fill="#3aaa35"/><path d="M403.5 787.5L424 807L403.5 826.5Z" fill="#fff" stroke="#fff" stroke-width="7" stroke-linejoin="round"/><path d="M1688.6 1342.1H1698.5Q1699.9 1342.1 1699.9 1343.5V1351.1Q1699.9 1352.5 1698.5 1352.5H1694.6L1691.2 1355L1691.4 1352.5H1688.6Q1687.2 1352.5 1687.2 1351.1V1343.5Q1687.2 1342.1 1688.6 1342.1Z" fill="#3c3c3b"/><path d="M1692.5 1344H1694.7L1694.4 1348.6H1692.8Z" fill="#f0f0f0"/><circle cx="1693.6" cy="1350.2" r="1" fill="#f0f0f0"/></svg>
<div class="a" style="left:185.7px;top:22.599999999999998px;width:10.6px;height:10.6px;border-radius:50%;background:#f6c500"></div>
<div class="a" style="left:285.59999999999997px;top:22.599999999999998px;width:10.6px;height:10.6px;border-radius:50%;background:#f6c500"></div>
<span class="t" style="left:393.23px;top:45.6px;font-size:12px;line-height:16px;letter-spacing:0.21px">Query</span>
<span class="t" style="left:1248.87px;top:45.6px;font-size:12px;line-height:16px;letter-spacing:0.04px">Results</span>
<span class="t" style="left:301.88px;top:75.6px;font-size:12px;line-height:16px;letter-spacing:-0.23px">324_A_2_HB11_1_CSSB00011217422_2</span>
<span class="t" style="left:283.32px;top:842.6px;font-size:12px;line-height:16px;letter-spacing:-0.36px">O=C(c1cc(OCC2CC2)ccc1)C=3N4C(=NC3)NCC4</span>
<span class="t" style="left:384.29px;top:872.6px;font-size:12px;line-height:16px;letter-spacing:0.39px">Matching</span>
<span class="t" style="left:825px;top:72.6px;font-size:12px;line-height:16px;font-weight:700;letter-spacing:0.22px">Result Summary:</span>
<span class="t" style="left:1125px;top:72.6px;font-size:12px;line-height:16px;font-weight:700;letter-spacing:0.25px">Used Parameters:</span>
<span class="t" style="left:1425px;top:72.6px;font-size:12px;line-height:16px;font-weight:700;letter-spacing:-0.04px">Search Session Info:</span>
<span class="t" style="left:895.3px;top:99.1px;font-size:13px;line-height:17px">•</span>
<span class="t" style="left:905px;top:99.6px;font-size:12px;line-height:16px;letter-spacing:0.16px">Query:</span>
<span class="t" style="left:955.9px;top:99.6px;font-size:12px;line-height:16px;letter-spacing:-0.1px">324_A_2_HB1...011217422_2</span>
<span class="t" style="left:895.3px;top:114.1px;font-size:13px;line-height:17px">•</span>
<span class="t" style="left:905px;top:114.6px;font-size:12px;line-height:16px;letter-spacing:0.21px">Found Molecules:</span>
<span class="t" style="left:1093.97px;top:114.6px;font-size:12px;line-height:16px">100</span>
<span class="t" style="left:895.3px;top:129.1px;font-size:13px;line-height:17px">•</span>
<span class="t" style="left:905px;top:129.6px;font-size:12px;line-height:16px;letter-spacing:0.11px">From AMBrosia_125bn_2025-07:</span>
<span class="t" style="left:1107.31px;top:129.6px;font-size:12px;line-height:16px">2</span>
<span class="t" style="left:895.3px;top:144.1px;font-size:13px;line-height:17px">•</span>
<span class="t" style="left:905px;top:144.6px;font-size:12px;line-height:16px">From CHEMriya_55bn_2025_07:</span>
<span class="t" style="left:1107.31px;top:144.6px;font-size:12px;line-height:16px">0</span>
<span class="t" style="left:895.3px;top:159.1px;font-size:13px;line-height:17px">•</span>
<span class="t" style="left:905px;top:159.6px;font-size:12px;line-height:16px;letter-spacing:0.06px">From eXplore_5tr_2025-07:</span>
<span class="t" style="left:1107.31px;top:159.6px;font-size:12px;line-height:16px">5</span>
<span class="t" style="left:1195.3px;top:99.1px;font-size:13px;line-height:17px">•</span>
<span class="t" style="left:1205px;top:99.6px;font-size:12px;line-height:16px;letter-spacing:0.34px">Maximum Number of Results:</span>
<span class="t" style="left:1393.47px;top:99.6px;font-size:12px;line-height:16px">100</span>
<span class="t" style="left:1195.3px;top:114.1px;font-size:13px;line-height:17px">•</span>
<span class="t" style="left:1205px;top:114.6px;font-size:12px;line-height:16px;letter-spacing:0.21px">Target Similarity:</span>
<span class="t" style="left:1390.14px;top:114.6px;font-size:12px;line-height:16px">1.00</span>
<span class="t" style="left:1195.3px;top:129.1px;font-size:13px;line-height:17px">•</span>
<span class="t" style="left:1205px;top:129.6px;font-size:12px;line-height:16px;letter-spacing:0.42px">Minimum Similarity:</span>
<span class="t" style="left:1390.14px;top:129.6px;font-size:12px;line-height:16px">0.80</span>
<span class="t" style="left:1195.3px;top:144.1px;font-size:13px;line-height:17px">•</span>
<span class="t" style="left:1205px;top:144.6px;font-size:12px;line-height:16px;letter-spacing:0.25px">Total Diversity:</span>
<span class="t" style="left:1390.14px;top:144.6px;font-size:12px;line-height:16px">1.00</span>
<span class="t" style="left:1495.3px;top:99.1px;font-size:13px;line-height:17px">•</span>
<span class="t" style="left:1505px;top:99.6px;font-size:12px;line-height:16px;letter-spacing:-0.11px">ID:</span>
<span class="t" style="left:1706.81px;top:99.6px;font-size:12px;line-height:16px">2</span>
<span class="t" style="left:1495.3px;top:114.1px;font-size:13px;line-height:17px">•</span>
<span class="t" style="left:1505px;top:114.6px;font-size:12px;line-height:16px;letter-spacing:0.07px">User:</span>
<span class="t" style="left:1598.83px;top:114.6px;font-size:12px;line-height:16px;letter-spacing:0.33px">Alexander Neumann</span>
<span class="t" style="left:1495.3px;top:129.1px;font-size:13px;line-height:17px">•</span>
<span class="t" style="left:1505px;top:129.6px;font-size:12px;line-height:16px;letter-spacing:0.25px">Started:</span>
<span class="t" style="left:1617.58px;top:129.6px;font-size:12px;line-height:16px;letter-spacing:0.08px">14:59 2025-10-17</span>
<span class="t" style="left:1495.3px;top:144.1px;font-size:13px;line-height:17px">•</span>
<span class="t" style="left:1505px;top:144.6px;font-size:12px;line-height:16px;letter-spacing:0.37px">Duration:</span>
<span class="t" style="left:1666.54px;top:144.6px;font-size:12px;line-height:16px;letter-spacing:0.04px">00:00:57</span>
<span class="t" style="left:1495.3px;top:159.1px;font-size:13px;line-height:17px">•</span>
<span class="t" style="left:1505px;top:159.6px;font-size:12px;line-height:16px;letter-spacing:0.18px">infiniSee Version:</span>
<span class="t" style="left:1686.56px;top:159.6px;font-size:12px;line-height:16px;letter-spacing:0.06px">7.0.0</span>
<span class="t" style="left:829px;top:218.6px;font-size:12px;line-height:16px;letter-spacing:0.19px">Molecules (# 100)</span>
<span class="t" style="left:1004.69px;top:245.1px;font-size:12px;line-height:16px;letter-spacing:0.37px">Molecule</span>
<span class="t" style="left:1176.66px;top:245.1px;font-size:12px;line-height:16px">#</span>
<span class="t" style="left:1228.99px;top:245.1px;font-size:12px;line-height:16px;letter-spacing:0.37px">Similarity</span>
<span class="t" style="left:1388.52px;top:245.1px;font-size:12px;line-height:16px;letter-spacing:-0.27px">Space</span>
<span class="t" style="left:1538.74px;top:245.1px;font-size:12px;line-height:16px;letter-spacing:0.17px">Name</span>
<span class="t" style="left:1640.3px;top:245.1px;font-size:12px;line-height:16px;letter-spacing:-0.2px">Reagent 1</span>
<span class="t" style="left:870.31px;top:357.1px;font-size:12px;line-height:16px">1</span>
<span class="t" style="left:1192.31px;top:357.1px;font-size:12px;line-height:16px">1</span>
<span class="t" style="left:1262.97px;top:357.1px;font-size:12px;line-height:16px">0.963</span>
<span class="t" style="left:1307px;top:357.1px;font-size:12px;line-height:16px;letter-spacing:-0.23px">REALSpace_76bn_2025-07</span>
<span class="t" style="left:1507px;top:357.1px;font-size:12px;line-height:16px">m_271...46478</span>
<span class="t" style="left:1649.29px;top:290.1px;font-size:10px;line-height:13px;letter-spacing:-0.42px">9176188</span>
<span class="t" style="left:870.31px;top:517.1px;font-size:12px;line-height:16px">2</span>
<span class="t" style="left:1192.31px;top:517.1px;font-size:12px;line-height:16px">2</span>
<span class="t" style="left:1262.97px;top:517.1px;font-size:12px;line-height:16px">0.963</span>
<span class="t" style="left:1307px;top:517.1px;font-size:12px;line-height:16px;letter-spacing:-0.23px">REALSpace_76bn_2025-07</span>
<span class="t" style="left:1507px;top:517.1px;font-size:12px;line-height:16px">m_271...46478</span>
<span class="t" style="left:1649.29px;top:450.1px;font-size:10px;line-height:13px;letter-spacing:-0.42px">9176184</span>
<span class="t" style="left:870.31px;top:677.1px;font-size:12px;line-height:16px">3</span>
<span class="t" style="left:1192.31px;top:677.1px;font-size:12px;line-height:16px">3</span>
<span class="t" style="left:1262.97px;top:677.1px;font-size:12px;line-height:16px">0.961</span>
<span class="t" style="left:1307px;top:677.1px;font-size:12px;line-height:16px;letter-spacing:-0.23px">REALSpace_76bn_2025-07</span>
<span class="t" style="left:1507px;top:677.1px;font-size:12px;line-height:16px">m_43b...37958</span>
<span class="t" style="left:1649.29px;top:610.1px;font-size:10px;line-height:13px;letter-spacing:-0.42px">9447596</span>
<span class="t" style="left:870.31px;top:837.1px;font-size:12px;line-height:16px">4</span>
<span class="t" style="left:1192.31px;top:837.1px;font-size:12px;line-height:16px">4</span>
<span class="t" style="left:1262.97px;top:837.1px;font-size:12px;line-height:16px">0.961</span>
<span class="t" style="left:1307px;top:837.1px;font-size:12px;line-height:16px;letter-spacing:-0.23px">REALSpace_76bn_2025-07</span>
<span class="t" style="left:1507px;top:837.1px;font-size:12px;line-height:16px">m_43b...37958</span>
<span class="t" style="left:1649.29px;top:770.1px;font-size:10px;line-height:13px;letter-spacing:-0.42px">9422674</span>
<span class="t" style="left:870.31px;top:997.1px;font-size:12px;line-height:16px">5</span>
<span class="t" style="left:1192.31px;top:997.1px;font-size:12px;line-height:16px">5</span>
<span class="t" style="left:1262.97px;top:997.1px;font-size:12px;line-height:16px">0.952</span>
<span class="t" style="left:1307px;top:997.1px;font-size:12px;line-height:16px;letter-spacing:-0.23px">REALSpace_76bn_2025-07</span>
<span class="t" style="left:1507px;top:997.1px;font-size:12px;line-height:16px">m_271...46478</span>
<span class="t" style="left:1646.78px;top:930.1px;font-size:10px;line-height:13px;letter-spacing:-0.44px">30386828</span>
<span class="t" style="left:870.31px;top:1157.1px;font-size:12px;line-height:16px">6</span>
<span class="t" style="left:1192.31px;top:1157.1px;font-size:12px;line-height:16px">6</span>
<span class="t" style="left:1262.97px;top:1157.1px;font-size:12px;line-height:16px">0.951</span>
<span class="t" style="left:1307px;top:1157.1px;font-size:12px;line-height:16px;letter-spacing:-0.23px">REALSpace_76bn_2025-07</span>
<span class="t" style="left:1507px;top:1157.1px;font-size:12px;line-height:16px">m_271...97414</span>
<span class="t" style="left:1646.78px;top:1090.1px;font-size:10px;line-height:13px;letter-spacing:-0.44px">28262944</span>
<span class="t" style="left:1646.78px;top:1250.1px;font-size:10px;line-height:13px;letter-spacing:-0.44px">28262944</span>
<span class="t" style="left:1588.85px;top:9.1px;font-size:16.5px;line-height:21px;font-weight:700;color:#0b9de2">?</span>
<span class="t" style="left:188.22px;top:22.3px;font-size:10px;line-height:13px;color:#000">6</span>
<span class="t" style="left:288.12px;top:22.3px;font-size:10px;line-height:13px;color:#000">2</span>
</div>
</body></html>
